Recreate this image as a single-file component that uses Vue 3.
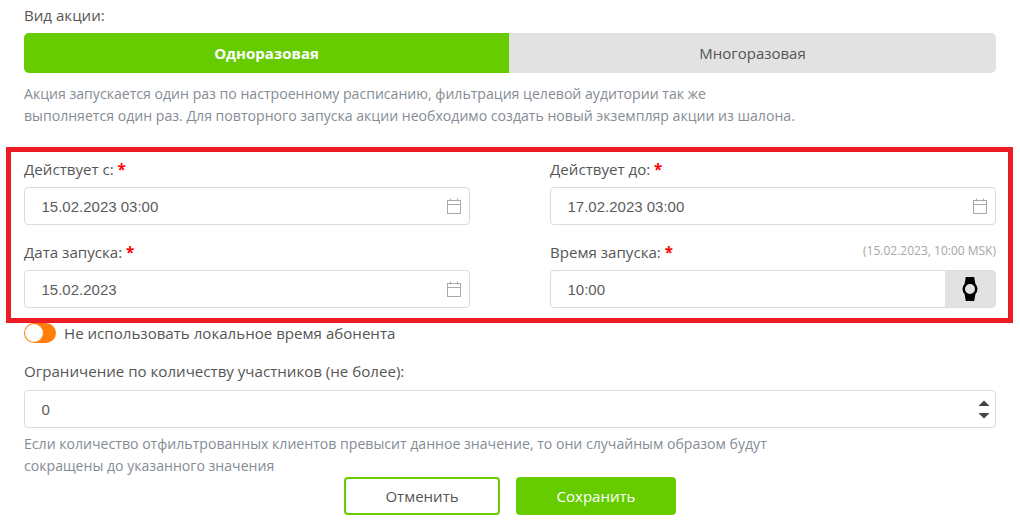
<script setup>
const fields = [
  { label: "Действует с:", value: "15.02.2023 03:00" },
  { label: "Действует до:", value: "17.02.2023 03:00" },
  { label: "Дата запуска:", value: "15.02.2023" },
  { label: "Время запуска:", value: "10:00", note: "(15.02.2023, 10:00 MSK)", clock: true },
];
</script>

<template>
  <main class="page">
    <div class="label first">Вид акции:</div>
    <div class="segment">
      <button class="seg active">Одноразовая</button>
      <button class="seg">Многоразовая</button>
    </div>
    <p class="hint top-hint">
      Акция запускается один раз по настроенному расписанию, фильтрация целевой аудитории так же<br />
      выполняется один раз. Для повторного запуска акции необходимо создать новый экземпляр акции из шалона.
    </p>

    <section class="dates">
      <div class="highlight"></div>
      <div v-for="f in fields" :key="f.label" class="field">
        <div class="field-head">
          <span class="label">{{ f.label }} <b class="req">*</b></span>
          <span v-if="f.note" class="note">{{ f.note }}</span>
        </div>
        <div class="input">
          <span class="value">{{ f.value }}</span>
          <span v-if="f.clock" class="addon">
            <svg width="16" height="24" viewBox="0 0 16 24">
              <path d="M3.8 0h8.4l1.2 7H2.6zM2.6 17h10.8L12.200 24H3.800z" fill="#000" />
              <circle cx="8" cy="12" r="6.250" fill="#e2e2e2" stroke="#000" stroke-width="2.500" />
            </svg>
          </span>
          <svg v-else class="cal" width="16" height="16" viewBox="0 0 16 16" fill="none" stroke="#aaa" stroke-width="1">
            <rect x="1.5" y="2.5" width="13" height="13" />
            <path d="M1.5 6.500h13M4.500 0.500v3M11.500 0.500v3" />
          </svg>
        </div>
      </div>
    </section>

    <div class="toggle-row">
      <span class="toggle"><i></i></span>
      <span class="label">Не использовать локальное время абонента</span>
    </div>

    <div class="label limit-label">Ограничение по количеству участников (не более):</div>
    <div class="input">
      <span class="value">0</span>
      <span class="spin">
        <svg width="12" height="6" viewBox="0 0 12 6"><path d="M6 .5l5.500 5.500H.5z" fill="#444" /></svg>
        <svg width="12" height="6" viewBox="0 0 12 6"><path d="M.5 0h11L6 5.500z" fill="#444" /></svg>
      </span>
    </div>
    <p class="hint bottom-hint">
      Если количество отфильтрованных клиентов превысит данное значение, то они случайным образом будут<br />
      сокращены до указанного значения
    </p>

    <div class="actions">
      <button class="btn cancel">Отменить</button>
      <button class="btn save">Сохранить</button>
    </div>
  </main>
</template>

<style>
html,
body {
  margin: 0;
  background: #fff;
  overflow: hidden;
}
</style>

<style scoped>
.page {
  width: 1020px;
  height: 525px;
  box-sizing: border-box;
  padding: 0 24px;
  font-family: "Open Sans", sans-serif;
  font-size: 15.1px;
  color: #555;
  overflow: hidden;
}
.label {
  line-height: 20px;
  color: #555;
}
.first {
  padding-top: 5px;
  margin-bottom: 8px;
}
.segment {
  display: flex;
  height: 40px;
  border-radius: 5px;
  overflow: hidden;
}
.seg {
  flex: 1;
  border: none;
  padding: 0;
  background: #e2e2e2;
  color: #555;
  font: 15px "Open Sans", sans-serif;
}
.seg.active {
  flex: 0 0 485px;
  background: #66cc00;
  color: #fff;
  font-weight: 700;
}
.hint {
  margin: 0;
  font-size: 14.1px;
  line-height: 22px;
  color: #858c94;
}
.top-hint {
  margin-top: 10px;
}
.dates {
  position: relative;
  display: grid;
  grid-template-columns: 446px 446px;
  column-gap: 80px;
  row-gap: 17px;
  margin-top: 32px;
}
.highlight {
  position: absolute;
  left: -18px;
  right: -17px;
  top: -12px;
  height: 176px;
  box-sizing: border-box;
  border: 5px solid #ed1c24;
  pointer-events: none;
}
.field-head {
  display: flex;
  justify-content: space-between;
  align-items: flex-start;
  height: 28px;
}
.req {
  color: #f00;
  font-weight: 700;
}
.note {
  font-size: 12px;
  line-height: 18px;
  color: #a6a6a6;
}
.input {
  display: flex;
  align-items: center;
  justify-content: space-between;
  height: 38px;
  box-sizing: border-box;
  border: 1px solid #dcdcdc;
  border-radius: 4px;
  padding-left: 16.5px;
  background: #fff;
  overflow: hidden;
}
.value {
  font-family: "Liberation Sans", Arial, sans-serif;
  font-size: 15px;
  color: #5c5c5c;
}
.cal {
  margin-right: 7px;
}
.addon {
  display: flex;
  align-items: center;
  justify-content: center;
  width: 50px;
  height: 100%;
  background: #e2e2e2;
}
.toggle-row {
  display: flex;
  align-items: center;
  gap: 8px;
  height: 20px;
  margin-top: 15px;
}
.toggle {
  position: relative;
  width: 32px;
  height: 20px;
  border-radius: 10px;
  background: #ff7f0a;
}
.toggle i {
  position: absolute;
  left: 1px;
  top: 1px;
  width: 18px;
  height: 18px;
  border-radius: 50%;
  background: #fff;
}
.limit-label {
  margin-top: 18px;
  margin-bottom: 9px;
}
.spin {
  display: flex;
  flex-direction: column;
  gap: 7px;
  margin-right: 5px;
}
.spin svg {
  display: block;
}
.bottom-hint {
  margin-top: 5px;
}
.actions {
  display: flex;
  justify-content: center;
  gap: 16px;
}
.btn {
  height: 38px;
  box-sizing: border-box;
  border-radius: 4px;
  font: 15px "Open Sans", sans-serif;
}
.cancel {
  width: 156px;
  border: 2px solid #66cc00;
  background: #fff;
  color: #555;
}
.save {
  width: 160px;
  border: none;
  background: #66cc00;
  color: #fff;
}
</style>
